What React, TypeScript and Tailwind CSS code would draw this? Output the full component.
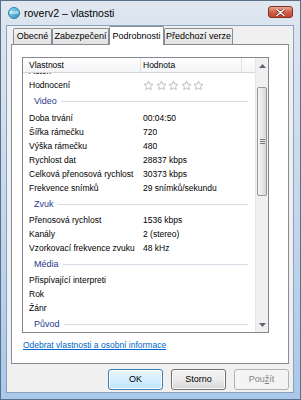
import React from "react";

type Row =
  | { kind: "row"; name: string; value?: React.ReactNode }
  | { kind: "group"; name: string; h: string };

function Stars() {
  return (
    <div className="flex items-center gap-[1.5px]">
      {[0, 1, 2, 3, 4].map((i) => (
        <svg key={i} width="11" height="11" viewBox="0 0 24 24">
          <path
            d="M12 2.5l2.9 6.2 6.8.8-5 4.7 1.3 6.7L12 17.6l-6 3.3 1.3-6.7-5-4.7 6.8-.8z"
            fill="#ffffff"
            stroke="#a4a8ae"
            strokeWidth="1.6"
            strokeLinejoin="round"
          />
        </svg>
      ))}
    </div>
  );
}

const rows: Row[] = [
  { kind: "row", name: "Autoři" },
  { kind: "row", name: "Hodnocení", value: <Stars /> },
  { kind: "group", name: "Video", h: "h-[19px]" },
  { kind: "row", name: "Doba trvání", value: "00:04:50" },
  { kind: "row", name: "Šířka rámečku", value: "720" },
  { kind: "row", name: "Výška rámečku", value: "480" },
  { kind: "row", name: "Rychlost dat", value: "28837 kbps" },
  { kind: "row", name: "Celková přenosová rychlost", value: "30373 kbps" },
  { kind: "row", name: "Frekvence snímků", value: "29 snímků/sekundu" },
  { kind: "group", name: "Zvuk", h: "h-[18px]" },
  { kind: "row", name: "Přenosová rychlost", value: "1536 kbps" },
  { kind: "row", name: "Kanály", value: "2 (stereo)" },
  { kind: "row", name: "Vzorkovací frekvence zvuku", value: "48 kHz" },
  { kind: "group", name: "Média", h: "h-[18px]" },
  { kind: "row", name: "Přispívající interpreti" },
  { kind: "row", name: "Rok" },
  { kind: "row", name: "Žánr" },
  { kind: "group", name: "Původ", h: "h-[18px]" },
];

function Tab({ label, w, active }: { label: string; w: string; active?: boolean }) {
  if (active) {
    return (
      <div
        className={`${w} h-[19px] -mb-px z-10 flex items-center justify-center border border-b-0 border-[#898c95] bg-white rounded-t-[2px] text-black`}
      >
        {label}
      </div>
    );
  }
  return (
    <div
      className={`${w} h-[16px] mt-[2px] flex items-center justify-center border border-b-0 border-[#898c95] bg-gradient-to-b from-[#f3f3f3] to-[#e2e2e2] rounded-t-[2px] text-black`}
    >
      {label}
    </div>
  );
}

function Arrow({ up }: { up?: boolean }) {
  return (
    <svg width="7" height="4" viewBox="0 0 7 4">
      <path d={up ? "M0 4L3.5 0L7 4z" : "M0 0L3.5 4L7 0z"} fill="#5d6670" />
    </svg>
  );
}

function Scrollbar() {
  return (
    <div className="w-[13px] flex flex-col bg-[#f0f0f0] border-l border-[#e6e6e6]">
      <div className="h-[15px] flex items-center justify-center">
        <Arrow up />
      </div>
      <div className="h-[14px]" />
      <div className="h-[109px] mx-px rounded-[2px] border border-[#979797] bg-gradient-to-r from-[#f4f4f4] via-[#e8e8e8] to-[#d6d6d6] flex items-center justify-center">
        <div className="flex flex-col gap-[1px]">
          <div className="w-[5px] h-px bg-[#7a7a7a]" />
          <div className="w-[5px] h-px bg-[#7a7a7a]" />
          <div className="w-[5px] h-px bg-[#7a7a7a]" />
        </div>
      </div>
      <div className="flex-1" />
      <div className="h-[15px] flex items-center justify-center">
        <Arrow />
      </div>
    </div>
  );
}

function PropertyList() {
  return (
    <div className="ml-[10px] w-[247px] h-[276px] border border-[#828790] bg-white flex overflow-hidden">
      <div className="flex-1 flex flex-col min-w-0">
        <div className="h-[15px] shrink-0 flex border-b border-[#d5d5d5] bg-gradient-to-b from-white to-[#f3f4f6]">
          <div className="w-[118px] pl-[6px] flex items-center border-r border-[#e1e2e5]">Vlastnost</div>
          <div className="w-[101px] pl-[2px] flex items-center border-r border-[#e1e2e5]">Hodnota</div>
          <div className="flex-1" />
        </div>
        <div className="flex-1 overflow-hidden">
          <div className="-mt-[9px]">
            {rows.map((r) =>
              r.kind === "group" ? (
                <div key={r.name} className={`${r.h} flex items-center pl-[11px] pr-[7px]`}>
                  <span className="text-[#1e3a8c] text-[9px]">{r.name}</span>
                  <div className="flex-1 h-px bg-[#d3dbe5] ml-[4px]" />
                </div>
              ) : (
                <div key={r.name} className="h-[14px] flex items-center">
                  <div className="w-[118px] pl-[6px] whitespace-nowrap">{r.name}</div>
                  <div className="pl-[2px] whitespace-nowrap">{r.value}</div>
                </div>
              ),
            )}
          </div>
        </div>
      </div>
      <Scrollbar />
    </div>
  );
}

function Btn({ children, kind }: { children: React.ReactNode; kind?: "default" | "disabled" }) {
  const base = "w-[55px] h-[21px] rounded-[3px] flex items-center justify-center border";
  if (kind === "default") {
    return (
      <div className={`${base} border-[#3c7fb1] bg-gradient-to-b from-[#eaf6fd] to-[#bee6fd] shadow-[inset_0_0_0_1px_#ffffff]`}>
        {children}
      </div>
    );
  }
  if (kind === "disabled") {
    return <div className={`${base} border-[#adb2b5] bg-[#f4f4f4] text-[#838383]`}>{children}</div>;
  }
  return (
    <div className={`${base} border-[#707070] bg-gradient-to-b from-[#f2f2f2] via-[#ebebeb] to-[#d5d5d5] shadow-[inset_0_0_0_1px_#fcfcfc]`}>
      {children}
    </div>
  );
}

export default function App() {
  return (
    <div className="w-[301px] h-[400px] flex flex-col border border-[#5a6f88] bg-gradient-to-b from-[#dfe7f0] via-[#c6d8ec] to-[#a9c8ea] font-['Liberation_Sans',Arial,sans-serif] text-[8.5px] text-black leading-none overflow-hidden">
      {/* title bar */}
      <div className="h-[24px] shrink-0 flex items-center">
        <div className="ml-[7px] w-[12px] h-[12px] rounded-full bg-gradient-to-br from-[#8fe0f0] to-[#2a8fb8] border border-[#2b7ea3] flex items-center justify-center">
          <span className="text-[4px] text-white font-bold">ROV</span>
        </div>
        <span className="ml-[4px] text-[10.5px] text-black">roverv2 – vlastnosti</span>
        <div className="ml-auto mr-[7px] mb-[2px] w-[25px] h-[12px] rounded-[3px] border border-[#7a3427] bg-gradient-to-b from-[#eaa795] via-[#d2604a] to-[#c4452e] flex items-center justify-center">
          <svg width="9" height="7" viewBox="0 0 9 7">
            <path d="M1 0.5L8 6.5M8 0.5L1 6.5" stroke="#5a1c12" strokeWidth="2.6" strokeLinecap="round" />
            <path d="M1 0.5L8 6.5M8 0.5L1 6.5" stroke="#ffffff" strokeWidth="1.5" strokeLinecap="round" />
          </svg>
        </div>
      </div>

      {/* client area */}
      <div className="flex-1 ml-[5px] mr-[6px] border border-[#8aa2bf] bg-[#f0f0f0] flex flex-col">
        <div className="h-[18px] flex pl-[6px] shrink-0 text-[9px]">
          <Tab label="Obecné" w="w-[39px]" />
          <Tab label="Zabezpečení" w="w-[57px]" />
          <Tab label="Podrobnosti" w="w-[55px]" active />
          <Tab label="Předchozí verze" w="w-[69px]" />
        </div>
        <div className="mx-[4px] h-[320px] border border-[#898c95] bg-white pt-[12px] flex flex-col">
          <PropertyList />
          <div className="ml-[11px] mt-[8px] text-[#0066cc] underline whitespace-nowrap">
            Odebrat vlastnosti a osobní informace
          </div>
        </div>
        <div className="mt-[5px] flex justify-end gap-[8px] pr-[4px] text-[9px]">
          <Btn kind="default">OK</Btn>
          <Btn>Storno</Btn>
          <Btn kind="disabled">
            <span>
              Pou<span className="underline">ž</span>ít
            </span>
          </Btn>
        </div>
      </div>
      <div className="h-[6px] shrink-0" />
    </div>
  );
}
